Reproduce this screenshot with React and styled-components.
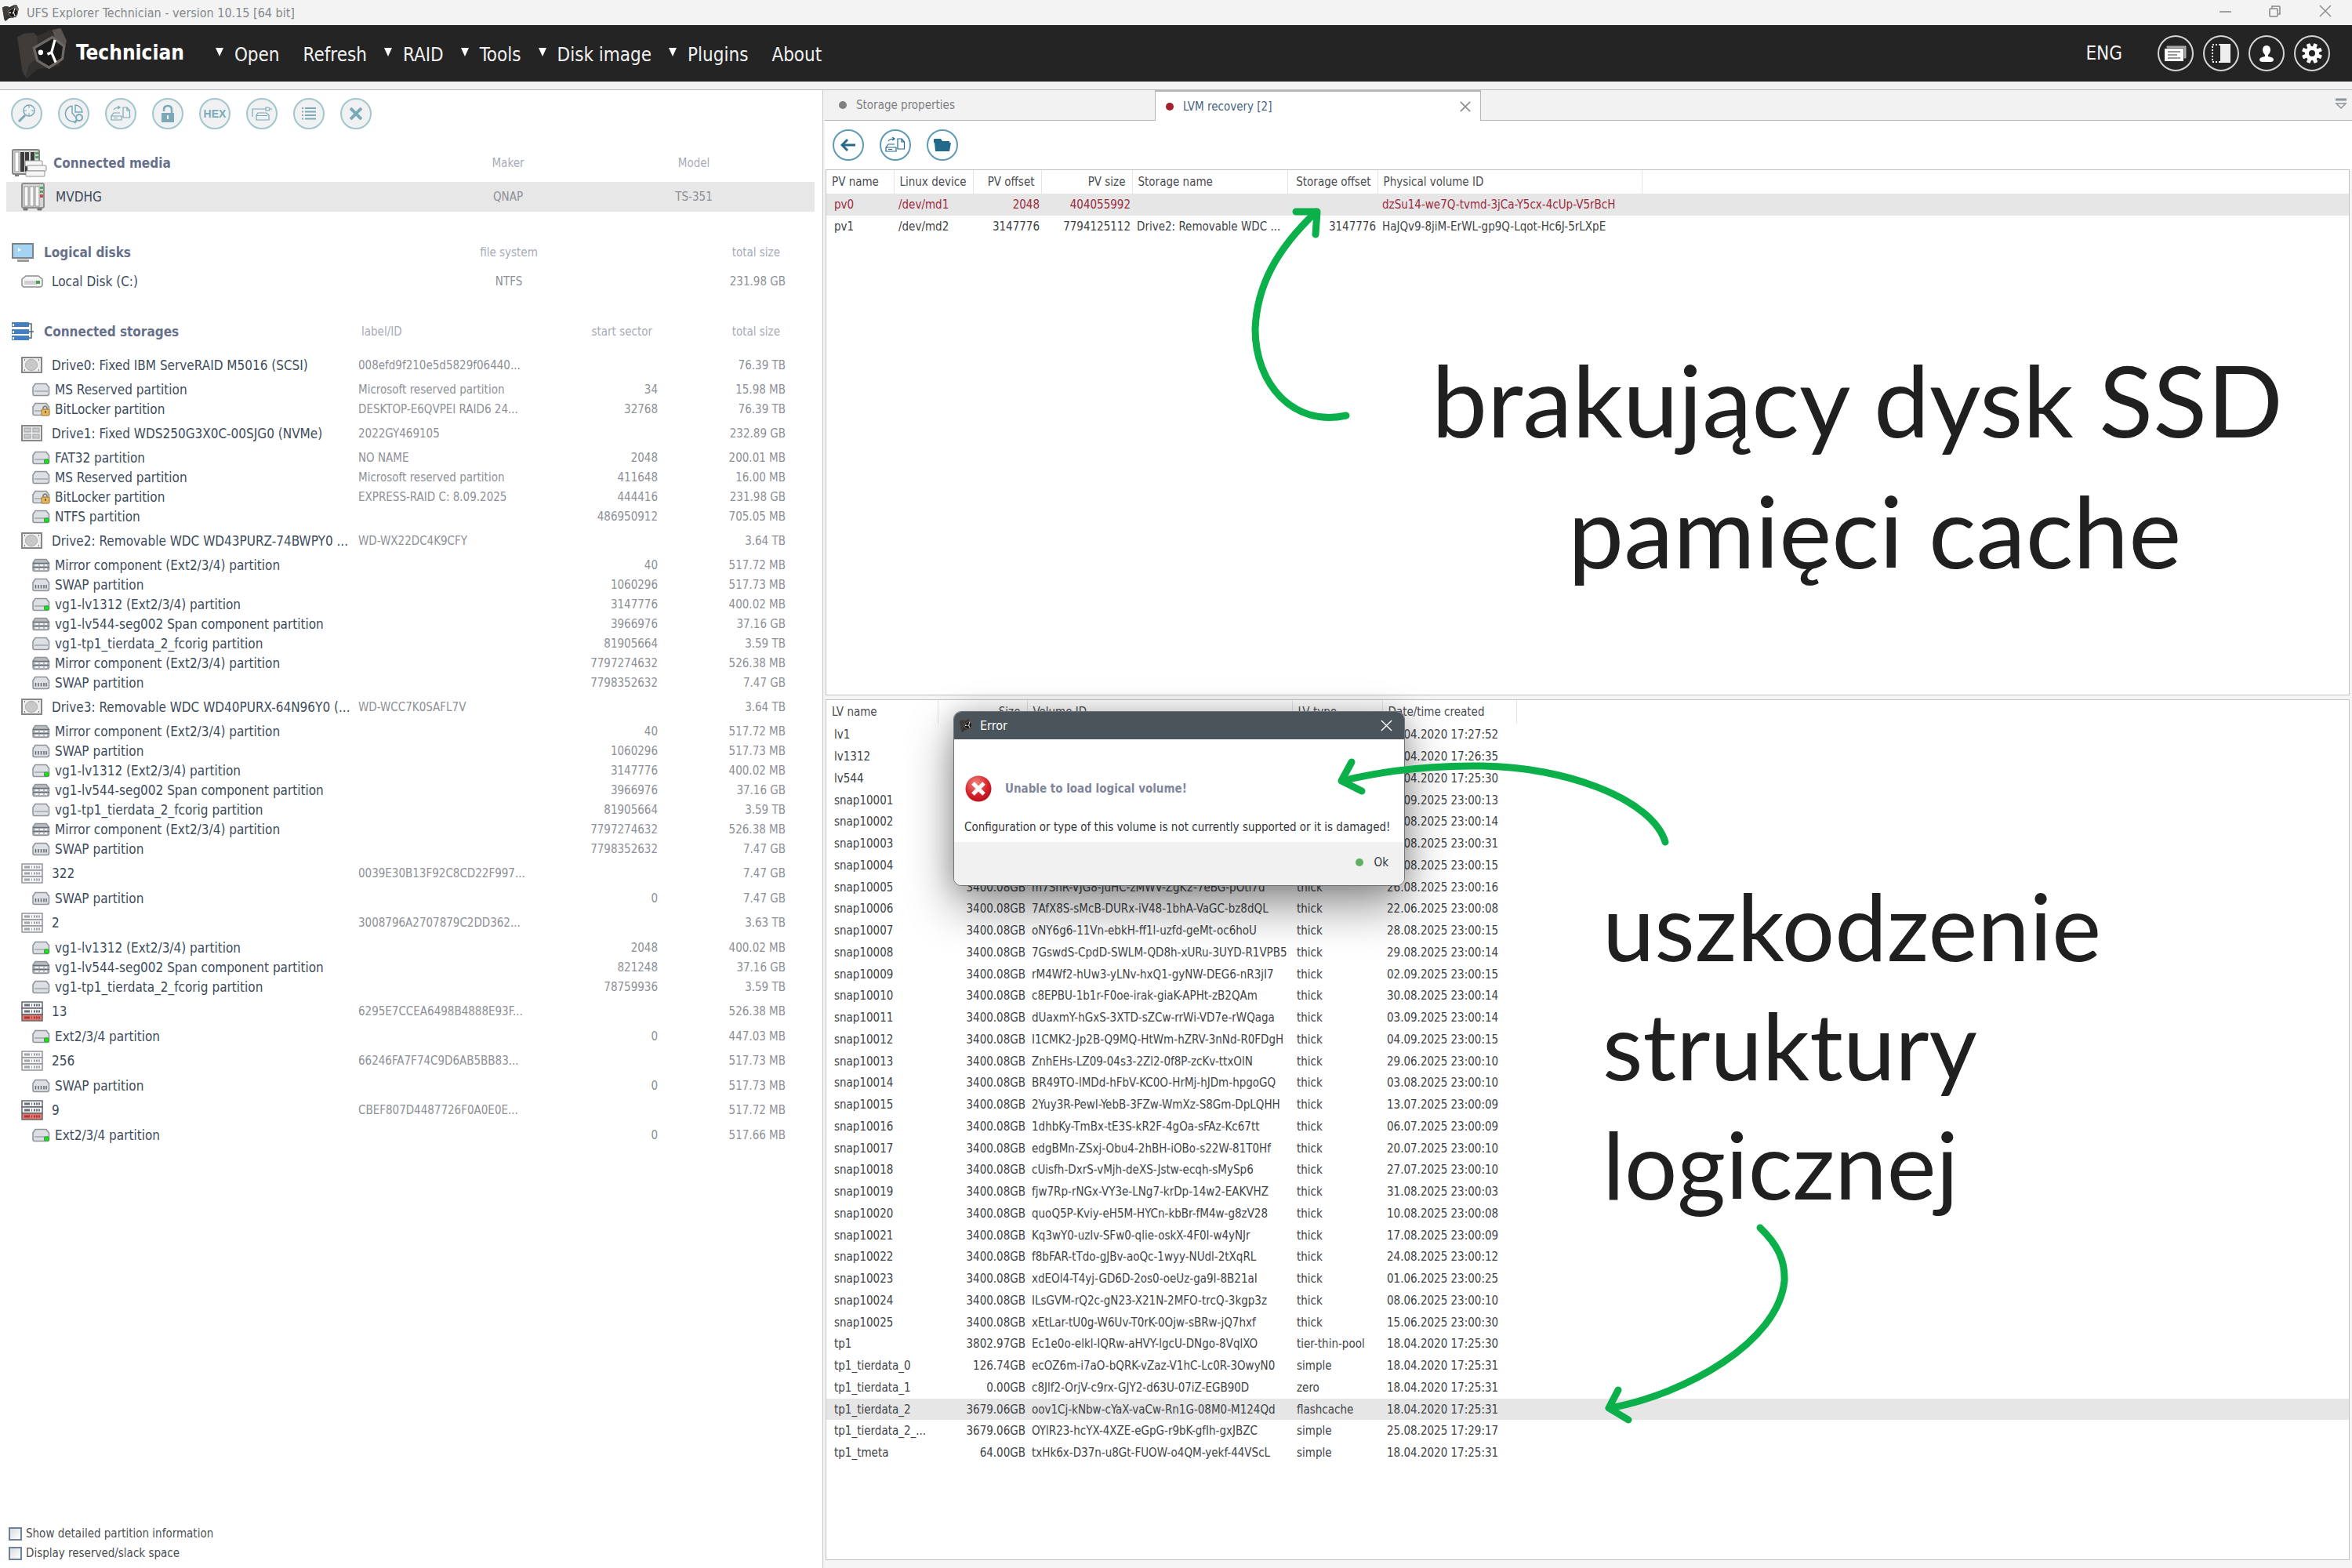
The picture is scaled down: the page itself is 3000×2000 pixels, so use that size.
import React, { useState } from 'react';
import styled, { createGlobalStyle } from 'styled-components';

const GlobalStyle = createGlobalStyle`
  * { box-sizing: border-box; }
  body {
    margin: 0;
    background: #f3f3f3;
    color: #33383d;
    font-family: "DejaVu Sans Condensed", "DejaVu Sans", "Noto Sans", sans-serif;
    font-size: 15px;
  }
  button { font: inherit; color: inherit; background: none; border: 0; padding: 0; cursor: pointer; }
  svg { display: block; }
`;

const Window = styled.div`
  position: relative;
  min-height: 100vh;
  display: flex;
  flex-direction: column;
`;

const TitleBar = styled.header`
  display: flex;
  align-items: center;
  gap: 10px;
  height: 32px;
  padding: 0 26px 0 3px;
  color: #85888b;
  font-size: 16px;
`;

const WindowTitle = styled.span`
  flex: 1;
`;

const WindowButtons = styled.div`
  display: flex;
  gap: 48px;
  margin-bottom: 4px;
`;

const MenuBar = styled.nav`
  display: flex;
  align-items: center;
  height: 72px;
  padding: 0 28px 0 22px;
  background: #242424;
  color: #f1f1f1;
  font-size: 24px;
`;

const Brand = styled.strong`
  margin: 0 40px 2px 11px;
  color: #fff;
  font-size: 26px;
`;

const MenuItems = styled.div`
  display: flex;
  gap: 22px;
  flex: 1;
  padding-top: 3px;
`;

const MenuButton = styled.button`
  display: flex;
  align-items: center;
  gap: 14px;
  margin-left: ${({ $arrow }) => ($arrow ? 0 : 8)}px;

  svg { margin-bottom: 6px; }
`;

const Language = styled.button`
  margin-right: 45px;
`;

const RoundTools = styled.div`
  display: flex;
  gap: 12px;
`;

const RoundTool = styled.button`
  display: grid;
  place-items: center;
  width: 46px;
  height: 46px;
  border: 2px solid #d4d4d4;
  border-radius: 50%;
`;

const Workspace = styled.main`
  flex: 1;
  display: flex;
  margin-top: 10px;
  border-top: 1px solid #b9b9b9;
`;

const Sidebar = styled.section`
  display: flex;
  flex-direction: column;
  width: 35%;
  padding-top: 10px;
  background: #fff;
  border-right: 1px solid #c6c6d2;
`;

const Toolbar = styled.div`
  display: flex;
  gap: 20px;
  padding: ${({ $inset }) => $inset};
`;

const CircleButton = styled.button`
  display: grid;
  place-items: center;
  width: 40px;
  height: 40px;
  border: 2px solid ${({ $strong }) => ($strong ? '#5f9ab8' : '#a3c6cc')};
  border-radius: 50%;
  background: ${({ $strong }) => ($strong ? '#fff' : '#eff1f3')};
  color: ${({ $strong }) => ($strong ? '#22698c' : '#7ba9b8')};
`;

const HexText = styled.span`
  font-family: "Liberation Sans", Arial, sans-serif;
  font-size: 14px;
  font-weight: 700;
`;

const TreeTable = styled.table`
  width: calc(100% - 18px);
  margin: 0 10px 28px 8px;
  border-collapse: collapse;
  table-layout: fixed;
  font-size: 15px;

  th, td { padding: 0; white-space: nowrap; }
`;

const TreeTitle = styled.th`
  height: 48px;
  color: #66708a;
  font-size: 17px;
  text-align: left;
`;

const TreeHead = styled.th`
  color: #a7abb6;
  font-size: 15px;
  font-weight: 400;
  text-align: ${({ $align }) => $align || 'left'};

  && {
    padding-right: ${({ $align }) => ($align === 'right' ? 7 : 0)}px;
    padding-left: ${({ $align }) => ($align ? 0 : 4)}px;
  }
`;

const TreeRow = styled.tr`
  height: ${({ $height }) => $height}px;
  background: ${({ $selected }) => ($selected ? '#e7e7e7' : 'transparent')};
`;

const TreeName = styled.td`
  color: #3d4c5b;
  font-size: 17px;
`;

const TreeCell = styled.td`
  color: #8d9096;
  text-align: ${({ $align }) => $align || 'left'};
`;

const IconLabel = styled.div`
  display: flex;
  align-items: center;
  gap: ${({ $gap }) => $gap}px;
  padding-left: ${({ $indent }) => $indent}px;
`;

const Options = styled.div`
  display: flex;
  flex-direction: column;
  gap: 5px;
  margin-top: auto;
  padding: 0 11px 9px;
`;

const Option = styled.label`
  display: flex;
  align-items: center;
  gap: 5px;
  height: 20px;
  color: #4b4f52;
`;

const Checkbox = styled.input`
  appearance: none;
  width: 17px;
  height: 17px;
  margin: 0;
  border: 2px solid #6d8299;
  background: linear-gradient(135deg, #d9dcdf, #fff);

  &:checked { background: #6d8299; }
`;

const Content = styled.section`
  flex: 1;
  min-width: 0;
  display: flex;
  flex-direction: column;
  margin-left: 2px;
  background: #fff;
`;

const Tabs = styled.div`
  display: flex;
  height: 39px;
  background: #f2f2f2;
`;

const Tab = styled.button`
  display: flex;
  align-items: center;
  gap: 12px;
  width: ${({ $width }) => $width}px;
  padding: ${({ $active }) => ($active ? '0 12px 0 13px' : '0 14px 2px 18px')};
  border: solid #b5b5b5;
  border-width: ${({ $active }) => ($active ? '2px 1px 0 1px' : '2px 0 1px 0')};
  border-top-color: ${({ $active }) => ($active ? '#b5b5b5' : 'transparent')};
  background: ${({ $active }) => ($active ? '#fff' : 'transparent')};
  color: ${({ $active }) => ($active ? '#47657f' : '#7d8083')};
  text-align: left;
`;

const TabLabel = styled.span`
  flex: 1;
`;

const TabFill = styled.div`
  flex: 1;
  display: flex;
  justify-content: flex-end;
  align-items: flex-start;
  padding: 10px 6px 0 0;
  border-bottom: 1px solid #b5b5b5;
`;

const Dot = styled.span`
  width: 10px;
  height: 10px;
  border-radius: 50%;
  background: ${({ $color }) => $color};
`;

const Panes = styled.div`
  flex: 1;
  display: grid;
  grid-template-rows: minmax(0, 671fr) minmax(0, 1097fr);
  gap: 5px;
  padding: 0 3px 10px 1px;
  background: #f5f5f5;
`;

const Pane = styled.div`
  overflow: hidden;
  border: 1px solid #c2c2c4;
  background: #fff;
`;

const Grid = styled.table`
  width: 100%;
  border-collapse: collapse;
  table-layout: fixed;
  white-space: nowrap;
`;

const GridHead = styled.th`
  height: 30px;
  padding: 0 8px 0 7px;
  border-right: 1px solid ${({ $last }) => ($last ? 'transparent' : '#e4e4e4')};
  color: #4a4d50;
  font-weight: 400;
  text-align: ${({ $align }) => $align || 'left'};
`;

const GridRow = styled.tr`
  height: 28px;
  background: ${({ $selected }) => ($selected ? '#e6e6e6' : 'transparent')};
  color: ${({ $missing }) => ($missing ? '#9c2b3f' : '#404346')};

  &:nth-child(4n) { height: 27px; }
`;

const GridCell = styled.td`
  padding: 0 2px 0 6px;
  text-align: ${({ $align }) => $align || 'left'};

  &:first-child { padding-left: 10px; }
`;

const Dialog = styled.div`
  position: absolute;
  left: 1216px;
  top: 907px;
  width: 576px;
  overflow: hidden;
  border: 1px solid #6f7478;
  border-radius: 10px;
  background: #fff;
  box-shadow: 0 26px 60px rgba(0, 0, 0, 0.42), 0 0 30px rgba(0, 0, 0, 0.18);
`;

const DialogTitle = styled.div`
  display: flex;
  align-items: center;
  gap: 9px;
  height: 35px;
  padding: 0 15px 0 7px;
  background: #4b545a;
  color: #fff;
  font-size: 16px;
`;

const DialogBody = styled.div`
  height: 131px;
  padding: 45px 13px 0;
`;

const DialogHeading = styled.div`
  display: flex;
  align-items: center;
  gap: 16px;
  color: #80869a;
  font-size: 15px;
  font-weight: 700;
`;

const DialogText = styled.p`
  margin: 22px 0 0;
  color: #33363a;
`;

const DialogFooter = styled.div`
  display: flex;
  justify-content: flex-end;
  height: 55px;
  padding: 0 20px 4px;
  background: #f1f1f1;
`;

const OkButton = styled.button`
  display: flex;
  align-items: center;
  gap: 14px;
`;

const Notes = styled.div`
  position: absolute;
  inset: 0;
  pointer-events: none;
  overflow: hidden;
`;

const Note = styled.p`
  position: absolute;
  left: ${({ $left }) => $left}px;
  top: ${({ $top }) => $top}px;
  margin: 0;
  color: #202020;
  font-family: Lato, "Open Sans", sans-serif;
  font-size: ${({ $size }) => $size}px;
  line-height: 152px;
  white-space: nowrap;
`;

const Arrows = styled.svg`
  position: absolute;
  left: 1580px;
  top: 240px;
`;

const Logo = ({ size = 18 }) => (
  <svg width={size} height={size} viewBox="0 0 60 56" preserveAspectRatio="none">
    <path d="M0 10 L8 6 20 5 24 9 40 2 50 0 54 4 59 14 57 24 50 42 24 46 12 56 8 52Z" fill="#33312f" />
    <path d="M0 10 L8 6 20 5 24 9 24 34 14 40 10 55 6 48Z" fill="#3f3c3a" />
    <path d="M42 2 L52 0 59 14 56 26 46 14Z" fill="#5a5552" />
    <path d="M20 22 L42 10 56 20 54 34 38 44 24 36Z" fill="#1a1a1a" stroke="#6d6863" strokeWidth="3" />
    <path d="M45 13 L41 27 46 38 M41 27 L36 29" fill="none" stroke="#fff" strokeWidth="3" />
    <circle cx="28" cy="27" r="3" fill="#fff" />
  </svg>
);

const Cross = ({ size = 16, color = '#8c8f92', weight = 2 }) => (
  <svg width={size} height={size} viewBox="0 0 16 16" stroke={color} strokeWidth={weight}>
    <path d="M1 1 L15 15 M15 1 L1 15" />
  </svg>
);

const NasIcon = () => (
  <svg width="32" height="36" viewBox="0 0 32 36">
    <rect x="2" y="1" width="28" height="31" rx="2" fill="#d6d6d6" stroke="#8f8f8f" strokeWidth="2" />
    {[5, 12, 19].map(x => <rect key={x} x={x} y="5" width="5" height="25" fill="#f8f8f8" stroke="#929292" />)}
    <path d="M4 33 h5 v2 h-5z M22 33 h5 v2 h-5z" fill="#777" stroke="#777" />
    <path d="M27 5 v8" stroke="#47a75a" strokeWidth="4" strokeDasharray="3 2" />
    <rect x="25" y="15" width="4" height="4" fill="#c54a50" />
  </svg>
);

const MediaIcon = () => (
  <svg width="46" height="36" viewBox="0 0 46 36">
    <rect x="1" y="1" width="34" height="31" rx="2" fill="#d8d8d8" stroke="#858585" strokeWidth="2" />
    <rect x="4" y="4" width="5" height="25" fill="#fff" stroke="#999" />
    {[11, 17, 24].map(x => <rect key={x} x={x} y="4" width="5" height="25" fill="#3d3d3d" />)}
    <path d="M32 4 v9" stroke="#47a75a" strokeWidth="4" strokeDasharray="3 2" />
    <path d="M4 33 h5 v2 h-5z" fill="#777" />
    <rect x="17" y="15" width="22" height="7" rx="1" fill="#f6f6f6" stroke="#929292" />
    <rect x="20" y="21" width="24" height="7" rx="1" fill="#f6f6f6" stroke="#929292" />
    <rect x="18" y="28" width="24" height="7" rx="1" fill="#f6f6f6" stroke="#929292" />
  </svg>
);

const MonitorIcon = () => (
  <svg width="28" height="24" viewBox="0 0 28 24">
    <rect x="1" y="1" width="26" height="18" fill="#a5d3f2" stroke="#7d838a" strokeWidth="2" />
    <path d="M8 6 l4 3 -4 2z" fill="#fff" />
    <path d="M7 22.5 h15" stroke="#999" strokeWidth="3" />
  </svg>
);

const LocalDiskIcon = () => (
  <svg width="28" height="16" viewBox="0 0 28 16">
    <path d="M1 5 L6 1 H22 L27 5 V13 L25 15 H3 L1 13Z" fill="#f5f5f5" stroke="#8a8d91" strokeWidth="1.5" />
    <rect x="4" y="7" width="16" height="5" fill="#cfcfd2" />
    <rect x="19" y="7" width="5" height="4" fill="#45a450" />
  </svg>
);

const StoragesIcon = () => (
  <svg width="28" height="24" viewBox="0 0 28 24">
    {[0, 9, 17].map(y => (
      <g key={y}>
        <rect x="0" y={y} width="22" height="6" fill="#447fc0" />
        <rect x="1" y={y + 2} width="2" height="3" fill="#fff" />
      </g>
    ))}
    <path d="M22 2 h3 v18 h-3 M22 12 h6" fill="none" stroke="#5c6269" strokeWidth="1.5" />
  </svg>
);

const DriveIcon = ({ kind }) => {
  if (kind === 'hdd' || kind === 'nvme') {
    return (
      <svg width="28" height="21" viewBox="0 0 28 21">
        <rect x="1" y="1" width="25" height="19" fill="#ededed" stroke="#85878a" strokeWidth="2" />
        {kind === 'hdd' ? (
          <>
            <ellipse cx="13" cy="10.5" rx="7.5" ry="7" fill="#c8c8c8" stroke="#aaa" />
            <path d="M4 4h1M22 4h1M4 17h1M22 17h1" stroke="#777" strokeWidth="2" />
          </>
        ) : (
          <g fill="#c9cbcd" stroke="#9d9fa1">
            <rect x="4" y="4" width="8" height="5" /><rect x="15" y="4" width="8" height="5" />
            <rect x="4" y="12" width="8" height="5" /><rect x="15" y="12" width="8" height="5" />
          </g>
        )}
      </svg>
    );
  }
  const bad = kind === 'raidBad';
  return (
    <svg width="28" height="27" viewBox="0 0 28 27">
      {[1, 9, 17].map((y, i) => {
        const broken = bad && i === 2;
        return (
          <g key={y}>
            <rect x="1" y={y} width="26" height="8" fill={broken ? '#e8756c' : '#f4f5f6'} stroke={bad ? '#63676c' : '#94979b'} strokeWidth="1.5" />
            <path d={`M4 ${y + 4} h7 M13 ${y + 4} h1 M16 ${y + 4} h2 M19 ${y + 4} h2 M22 ${y + 4} h2`} stroke={broken ? '#a63a34' : bad ? '#6b6f75' : '#a2a5a9'} strokeWidth="3" />
          </g>
        );
      })}
    </svg>
  );
};

const PartitionIcon = ({ kind }) => (
  <svg width="24" height="18" viewBox="0 0 24 18">
    <path d="M1 6 L4 1.500 H18 L21.500 6 V14 Q21.500 16.500 19 16.500 H3 Q1 16.500 1 14Z" fill={kind === 'mirror' ? '#b9bdc2' : '#dcdfe3'} stroke="#8f9398" strokeWidth="1.5" />
    {kind === 'swap' && <path d="M4.500 13.500V9M8 13.500V9M11.500 13.500V9M15 13.500V9M18 13.500V9" stroke="#63686e" strokeWidth="1.5" />}
    {kind === 'mirror' && (
      <>
        <path d="M1 6.500H22M1 11.500H22" stroke="#6a6f76" strokeWidth="1.5" />
        <path d="M4 9H19M4 14H19" stroke="#f3f4f5" strokeWidth="2" strokeDasharray="4 2" />
      </>
    )}
    {(!kind || kind === 'ok' || kind === 'lock') && <path d="M3 11H20" stroke="#a3a7ac" strokeWidth="1.5" />}
    {kind === 'ok' && <rect x="15.500" y="11" width="6" height="5" rx="1" fill="#1fe01f" stroke="#3aa03d" />}
    {kind === 'lock' && (
      <>
        <path d="M14 9V7q2.500-4 5 0v2" fill="none" stroke="#777" strokeWidth="1.5" />
        <rect x="12" y="9" width="10" height="8" rx="1" fill="#eab65a" stroke="#9b7638" />
        <path d="M17 11v3" stroke="#6d4d16" strokeWidth="1.5" />
      </>
    )}
  </svg>
);

const toolIcons = {
  find: (
    <svg width="24" height="24" viewBox="0 0 24 24" fill="none" stroke="currentColor" strokeWidth="1.500">
      <circle cx="15" cy="8" r="7" /><path d="M10 14 L2 22" strokeWidth="3" /><path d="M15 1v4M15 11v4M8 8h4M18 8h4" strokeWidth="1" />
    </svg>
  ),
  scan: (
    <svg width="26" height="26" viewBox="0 0 26 26" fill="none" stroke="currentColor" strokeWidth="1.5">
      <path d="M11 3 A10 10 0 1 0 14 23 M11 3 V12 L15 17" /><path d="M15 2 V11 H24 Q23 3 15 2Z" /><circle cx="20" cy="18" r="4" strokeWidth="2" /><path d="M17 21l-3 4" strokeWidth="2.500" />
    </svg>
  ),
  copy: (
    <svg width="26" height="20" viewBox="0 0 26 20" fill="none" stroke="currentColor" strokeWidth="1.200">
      <path d="M1 13 L4 9 H12 M1 13 H14 V18 H1Z M4 15.500 H9" /><path d="M16 2 H21 L24.500 6 V15 H16Z M21 2V6H24.500" /><path d="M4 5 Q6 2 11 2 M9 0l3 2-3 2" />
    </svg>
  ),
  lock: (
    <svg width="18" height="24" viewBox="0 0 18 24">
      <path d="M4 9 V7 Q4 2 9 2 Q14 2 14 7 V12" fill="none" stroke="currentColor" strokeWidth="2.500" />
      <rect x="1" y="11" width="16" height="12" fill="currentColor" /><path d="M9 14v5" stroke="#fff" strokeWidth="2" />
    </svg>
  ),
  link: (
    <svg width="26" height="20" viewBox="0 0 26 20" fill="none" stroke="currentColor" strokeWidth="1.200">
      <path d="M1 14V4H18M18 2h3q2 0 2 2t-2 2h-3zM23 4h3" /><path d="M6 18V12L8 9H19L22 12V18Z M6 12.500h14" />
    </svg>
  ),
  list: (
    <svg width="18" height="18" viewBox="0 0 18 18" stroke="currentColor" strokeWidth="2">
      <path d="M0 2h2M4 2h14M0 6.500h2M4 6.500h14M0 11h2M4 11h14M0 15.500h2M4 15.500h14" />
    </svg>
  ),
  close: <Cross size={16} color="currentColor" weight={4} />,
  back: (
    <svg width="20" height="18" viewBox="0 0 20 18" fill="none" stroke="currentColor" strokeWidth="3">
      <path d="M19 9H2M9 2L2 9l7 7" />
    </svg>
  ),
  folder: (
    <svg width="22" height="18" viewBox="0 0 22 18" fill="currentColor">
      <path d="M0 2 Q0 1 1 1H9L11 4H20V6H0Z" /><path d="M1 6H22L20 17H2Z" />
    </svg>
  ),
};

const leftTools = [
  ['find', 'Find'], ['scan', 'Scan'], ['copy', 'Save image'], ['lock', 'Decrypt'],
  ['hex', 'Hex viewer'], ['link', 'Attach'], ['list', 'Properties'], ['close', 'Close storage'],
];

const menu = [
  ['Open', true], ['Refresh', false], ['RAID', true], ['Tools', true],
  ['Disk image', true], ['Plugins', true], ['About', false],
];

const wdParts = [
  ['mirror', 'Mirror component (Ext2/3/4) partition', '', '40', '517.72 MB'],
  ['swap', 'SWAP partition', '', '1060296', '517.73 MB'],
  ['ok', 'vg1-lv1312 (Ext2/3/4) partition', '', '3147776', '400.02 MB'],
  ['mirror', 'vg1-lv544-seg002 Span component partition', '', '3966976', '37.16 GB'],
  ['', 'vg1-tp1_tierdata_2_fcorig partition', '', '81905664', '3.59 TB'],
  ['mirror', 'Mirror component (Ext2/3/4) partition', '', '7797274632', '526.38 MB'],
  ['swap', 'SWAP partition', '', '7798352632', '7.47 GB'],
];

const storages = [
  {
    kind: 'hdd', name: 'Drive0: Fixed IBM ServeRAID M5016 (SCSI)', label: '008efd9f210e5d5829f06440...', size: '76.39 TB',
    parts: [
      ['', 'MS Reserved partition', 'Microsoft reserved partition', '34', '15.98 MB'],
      ['lock', 'BitLocker partition', 'DESKTOP-E6QVPEI RAID6 24...', '32768', '76.39 TB'],
    ],
  },
  {
    kind: 'nvme', name: 'Drive1: Fixed WDS250G3X0C-00SJG0 (NVMe)', label: '2022GY469105', size: '232.89 GB',
    parts: [
      ['ok', 'FAT32 partition', 'NO NAME', '2048', '200.01 MB'],
      ['', 'MS Reserved partition', 'Microsoft reserved partition', '411648', '16.00 MB'],
      ['lock', 'BitLocker partition', 'EXPRESS-RAID C: 8.09.2025', '444416', '231.98 GB'],
      ['ok', 'NTFS partition', '', '486950912', '705.05 MB'],
    ],
  },
  { kind: 'hdd', name: 'Drive2: Removable WDC WD43PURZ-74BWPY0 ...', label: 'WD-WX22DC4K9CFY', size: '3.64 TB', parts: wdParts },
  { kind: 'hdd', name: 'Drive3: Removable WDC WD40PURX-64N96Y0 (...', label: 'WD-WCC7K0SAFL7V', size: '3.64 TB', parts: wdParts },
  { kind: 'raid', name: '322', label: '0039E30B13F92C8CD22F997...', size: '7.47 GB', parts: [['swap', 'SWAP partition', '', '0', '7.47 GB']] },
  {
    kind: 'raid', name: '2', label: '3008796A2707879C2DD362...', size: '3.63 TB',
    parts: [
      ['ok', 'vg1-lv1312 (Ext2/3/4) partition', '', '2048', '400.02 MB'],
      ['mirror', 'vg1-lv544-seg002 Span component partition', '', '821248', '37.16 GB'],
      ['', 'vg1-tp1_tierdata_2_fcorig partition', '', '78759936', '3.59 TB'],
    ],
  },
  { kind: 'raidBad', name: '13', label: '6295E7CCEA6498B4888E93F...', size: '526.38 MB', parts: [['ok', 'Ext2/3/4 partition', '', '0', '447.03 MB']] },
  { kind: 'raid', name: '256', label: '66246FA7F74C9D6AB5BB83...', size: '517.73 MB', parts: [['swap', 'SWAP partition', '', '0', '517.73 MB']] },
  { kind: 'raidBad', name: '9', label: 'CBEF807D4487726F0A0E0E...', size: '517.72 MB', parts: [['ok', 'Ext2/3/4 partition', '', '0', '517.66 MB']] },
];

const pvColumns = [
  ['PV name', 86], ['Linux device', 101], ['PV offset', 87, 'right'], ['PV size', 116, 'right'],
  ['Storage name', 198], ['Storage offset', 115, 'right'], ['Physical volume ID', 337],
];

const pvRows = [
  ['pv0', '/dev/md1', '2048', '404055992', '', '', 'dzSu14-we7Q-tvmd-3jCa-Y5cx-4cUp-V5rBcH'],
  ['pv1', '/dev/md2', '3147776', '7794125112', 'Drive2: Removable WDC ...', '3147776', 'HaJQv9-8jiM-ErWL-gp9Q-Lqot-Hc6J-5rLXpE'],
];

const lvColumns = [
  ['LV name', 142], ['Size', 114, 'right'], ['Volume ID', 338], ['LV type', 115], ['Date/time created', 171],
];

// snap10005 and up
const snaps = [
  ['m7ShR-VJG8-juHC-zMWV-ZgK2-7eBG-pOti7d', '26.08.2025 23:00:16'],
  ['7AfX8S-sMcB-DURx-iV48-1bhA-VaGC-bz8dQL', '22.06.2025 23:00:08'],
  ['oNY6g6-11Vn-ebkH-ff1l-uzfd-geMt-oc6hoU', '28.08.2025 23:00:15'],
  ['7GswdS-CpdD-SWLM-QD8h-xURu-3UYD-R1VPB5', '29.08.2025 23:00:14'],
  ['rM4Wf2-hUw3-yLNv-hxQ1-gyNW-DEG6-nR3jI7', '02.09.2025 23:00:15'],
  ['c8EPBU-1b1r-F0oe-irak-giaK-APHt-zB2QAm', '30.08.2025 23:00:14'],
  ['dUaxmY-hGxS-3XTD-sZCw-rrWi-VD7e-rWQaga', '03.09.2025 23:00:14'],
  ['I1CMK2-Jp2B-Q9MQ-HtWm-hZRV-3nNd-R0FDgH', '04.09.2025 23:00:15'],
  ['ZnhEHs-LZ09-04s3-2Zl2-0f8P-zcKv-ttxOlN', '29.06.2025 23:00:10'],
  ['BR49TO-lMDd-hFbV-KC0O-HrMj-hJDm-hpgoGQ', '03.08.2025 23:00:10'],
  ['2Yuy3R-PewI-YebB-3FZw-WmXz-S8Gm-DpLQHH', '13.07.2025 23:00:09'],
  ['1dhbKy-TmBx-tE3S-kR2F-4gOa-sFAz-Kc67tt', '06.07.2025 23:00:09'],
  ['edgBMn-ZSxj-Obu4-2hBH-iOBo-s22W-81T0Hf', '20.07.2025 23:00:10'],
  ['cUisfh-DxrS-vMjh-deXS-Jstw-ecqh-sMySp6', '27.07.2025 23:00:10'],
  ['fjw7Rp-rNGx-VY3e-LNg7-krDp-14w2-EAKVHZ', '31.08.2025 23:00:03'],
  ['quoQ5P-Kviy-eH5M-HYCn-kbBr-fM4w-g8zV28', '10.08.2025 23:00:08'],
  ['Kq3wY0-uzIv-SFw0-qlie-oskX-4F0I-w4yNJr', '17.08.2025 23:00:09'],
  ['f8bFAR-tTdo-gJBv-aoQc-1wyy-NUdl-2tXqRL', '24.08.2025 23:00:12'],
  ['xdEOl4-T4yj-GD6D-2os0-oeUz-ga9I-8B21aI', '01.06.2025 23:00:25'],
  ['ILsGVM-rQ2c-gN23-X21N-2MFO-trcQ-3kgp3z', '08.06.2025 23:00:10'],
  ['xEtLar-tU0g-W6Uv-T0rK-0Ojw-sBRw-jQ7hxf', '15.06.2025 23:00:30'],
];

const lvRows = [
  ['lv1', '', '', '', '18.04.2020 17:27:52'],
  ['lv1312', '', '', '', '18.04.2020 17:26:35'],
  ['lv544', '', '', '', '18.04.2020 17:25:30'],
  ['snap10001', '', '', '', '01.09.2025 23:00:13'],
  ['snap10002', '', '', '', '24.08.2025 23:00:14'],
  ['snap10003', '', '', '', '31.08.2025 23:00:31'],
  ['snap10004', '', '', '', '27.08.2025 23:00:15'],
  ...snaps.map(([id, date], i) => [`snap${10005 + i}`, '3400.08GB', id, 'thick', date]),
  ['tp1', '3802.97GB', 'Ec1e0o-elkl-IQRw-aHVY-lgcU-DNgo-8VqlXO', 'tier-thin-pool', '18.04.2020 17:25:30'],
  ['tp1_tierdata_0', '126.74GB', 'ecOZ6m-i7aO-bQRK-vZaz-V1hC-Lc0R-3OwyN0', 'simple', '18.04.2020 17:25:31'],
  ['tp1_tierdata_1', '0.00GB', 'c8Jlf2-OrjV-c9rx-GJY2-d63U-07iZ-EGB90D', 'zero', '18.04.2020 17:25:31'],
  ['tp1_tierdata_2', '3679.06GB', 'oov1Cj-kNbw-cYaX-vaCw-Rn1G-08M0-M124Qd', 'flashcache', '18.04.2020 17:25:31'],
  ['tp1_tierdata_2_...', '3679.06GB', 'OYlR23-hcYX-4XZE-eGpG-r9bK-gfIh-gxJBZC', 'simple', '25.08.2025 17:29:17'],
  ['tp1_tmeta', '64.00GB', 'txHk6x-D37n-u8Gt-FUOW-o4QM-yekf-44VScL', 'simple', '18.04.2020 17:25:31'],
];

function DataGrid({ columns, rows, selected, missing }) {
  return (
    <Grid>
      <colgroup>
        {columns.map(([title, width]) => <col key={title} width={width} />)}
        <col />
      </colgroup>
      <thead>
        <tr>
          {columns.map(([title, , align]) => <GridHead key={title} $align={align}>{title}</GridHead>)}
          <GridHead $last />
        </tr>
      </thead>
      <tbody>
        {rows.map(row => (
          <GridRow key={row[0]} $selected={row[0] === selected} $missing={row[0] === missing}>
            {row.map((cell, i) => <GridCell key={i} $align={columns[i][2]}>{cell}</GridCell>)}
            <GridCell />
          </GridRow>
        ))}
      </tbody>
    </Grid>
  );
}

function StorageTree() {
  return (
    <>
      <TreeTable>
        <colgroup><col /><col width="238" /><col width="236" /><col width="36" /></colgroup>
        <thead>
          <tr>
            <TreeTitle><IconLabel $indent={7} $gap={7}><MediaIcon />Connected media</IconLabel></TreeTitle>
            <TreeHead $align="center">Maker</TreeHead>
            <TreeHead $align="center">Model</TreeHead>
            <th />
          </tr>
        </thead>
        <tbody>
          <TreeRow $height={38} $selected>
            <TreeName><IconLabel $indent={18} $gap={13}><NasIcon />MVDHG</IconLabel></TreeName>
            <TreeCell $align="center">QNAP</TreeCell>
            <TreeCell $align="center">TS-351</TreeCell>
            <td />
          </TreeRow>
        </tbody>
      </TreeTable>

      <TreeTable>
        <colgroup><col /><col width="238" /><col width="234" /><col width="37" /></colgroup>
        <thead>
          <tr>
            <TreeTitle><IconLabel $indent={7} $gap={13}><MonitorIcon />Logical disks</IconLabel></TreeTitle>
            <TreeHead $align="center">file system</TreeHead>
            <TreeHead $align="right">total size</TreeHead>
            <th />
          </tr>
        </thead>
        <tbody>
          <TreeRow $height={25}>
            <TreeName><IconLabel $indent={19} $gap={11}><LocalDiskIcon />Local Disk (C:)</IconLabel></TreeName>
            <TreeCell $align="center">NTFS</TreeCell>
            <TreeCell $align="right">231.98 GB</TreeCell>
            <td />
          </TreeRow>
        </tbody>
      </TreeTable>

      <TreeTable>
        <colgroup><col /><col width="234" /><col width="148" /><col width="163" /><col width="37" /></colgroup>
        <thead>
          <tr>
            <TreeTitle><IconLabel $indent={7} $gap={13}><StoragesIcon />Connected storages</IconLabel></TreeTitle>
            <TreeHead>label/ID</TreeHead>
            <TreeHead $align="right">start sector</TreeHead>
            <TreeHead $align="right">total size</TreeHead>
            <th />
          </tr>
        </thead>
        <tbody>
          {storages.map(drive => (
            <React.Fragment key={drive.name}>
              <TreeRow $height={drive.kind.startsWith('raid') ? 38 : 37}>
                <TreeName><IconLabel $indent={19} $gap={11}><DriveIcon kind={drive.kind} />{drive.name}</IconLabel></TreeName>
                <TreeCell>{drive.label}</TreeCell>
                <TreeCell />
                <TreeCell $align="right">{drive.size}</TreeCell>
                <td />
              </TreeRow>
              {drive.parts.map(([kind, name, label, start, size]) => (
                <TreeRow key={start} $height={25}>
                  <TreeName><IconLabel $indent={33} $gap={5}><PartitionIcon kind={kind} />{name}</IconLabel></TreeName>
                  <TreeCell>{label}</TreeCell>
                  <TreeCell $align="right">{start}</TreeCell>
                  <TreeCell $align="right">{size}</TreeCell>
                  <td />
                </TreeRow>
              ))}
            </React.Fragment>
          ))}
        </tbody>
      </TreeTable>
    </>
  );
}

function TopBar() {
  return (
    <>
      <TitleBar>
        <Logo size={21} />
        <WindowTitle>UFS Explorer Technician - version 10.15 [64 bit]</WindowTitle>
        <WindowButtons>
          <button aria-label="Minimize">
            <svg width="15" height="15" stroke="#85888b" strokeWidth="1.500"><path d="M0 8h15" /></svg>
          </button>
          <button aria-label="Restore">
            <svg width="16" height="15" fill="none" stroke="#85888b" strokeWidth="1.500"><rect x="1" y="4" width="10" height="10" rx="1" /><path d="M4 3V1h9q1 0 1 1v9h-2" /></svg>
          </button>
          <button aria-label="Close"><Cross weight={1.5} /></button>
        </WindowButtons>
      </TitleBar>
      <MenuBar>
        <Logo size={64} />
        <Brand>Technician</Brand>
        <MenuItems>
          {menu.map(([label, arrow]) => (
            <MenuButton key={label} $arrow={arrow}>
              {arrow && <svg width="10" height="11" viewBox="0 0 10 11" fill="#fff"><path d="M0 0H10L5 11Z" /></svg>}
              {label}
            </MenuButton>
          ))}
        </MenuItems>
        <Language>ENG</Language>
        <RoundTools>
          <RoundTool aria-label="Messages">
            <svg width="28" height="20" viewBox="0 0 28 20">
              <path d="M3 1H27V16H25V3H3Z" fill="#aaa" stroke="#aaa" />
              <rect x="0" y="4" width="24" height="16" fill="#fff" />
              <path d="M4 8h16M4 12h12M4 16h16" stroke="#777" strokeWidth="1.500" />
            </svg>
          </RoundTool>
          <RoundTool aria-label="Layout">
            <svg width="24" height="24" viewBox="0 0 24 24">
              <rect x="11" y="0" width="13" height="24" fill="#eee" />
              <path d="M11 1H1V23H11" fill="none" stroke="#fff" strokeWidth="2" strokeDasharray="2 2" />
            </svg>
          </RoundTool>
          <RoundTool aria-label="User">
            <svg width="18" height="21" viewBox="0 0 18 21" fill="#fff">
              <path d="M9 0Q14 0 14 6Q14 9 11 12V14Q18 15 18 18Q18 21 14 21H4Q0 21 0 18Q0 15 7 14V12Q4 9 4 6Q4 0 9 0Z" />
            </svg>
          </RoundTool>
          <RoundTool aria-label="Settings">
            <svg width="26" height="26" viewBox="-13 -13 26 26">
              {[22, 67, 112, 157].map(a => <rect key={a} x="-2.500" y="-13" width="5" height="26" rx="1" fill="#fff" transform={`rotate(${a})`} />)}
              <circle r="9" fill="#fff" /><circle r="4" fill="#242424" />
            </svg>
          </RoundTool>
        </RoundTools>
      </MenuBar>
    </>
  );
}

function ErrorDialog({ onClose }) {
  return (
    <Dialog role="dialog" aria-label="Error">
      <DialogTitle>
        <Logo size={17} />
        <TabLabel>Error</TabLabel>
        <button aria-label="Close dialog" onClick={onClose}><Cross size={15} color="#fff" weight={1.5} /></button>
      </DialogTitle>
      <DialogBody>
        <DialogHeading>
          <svg width="36" height="36" viewBox="0 0 36 36">
            <defs>
              <radialGradient id="error" cx="0.400" cy="0.300" r="0.800"><stop stopColor="#f08a80" /><stop offset="0.600" stopColor="#d5202a" /><stop offset="1" stopColor="#a80f1a" /></radialGradient>
            </defs>
            <circle cx="18" cy="18" r="16.500" fill="url(#error)" />
            <path d="M11 11L25 25M25 11L11 25" stroke="#fff" strokeWidth="5" />
          </svg>
          Unable to load logical volume!
        </DialogHeading>
        <DialogText>Configuration or type of this volume is not currently supported or it is damaged!</DialogText>
      </DialogBody>
      <DialogFooter>
        <OkButton onClick={onClose}><Dot $color="#5fb063" />Ok</OkButton>
      </DialogFooter>
    </Dialog>
  );
}

export default function App() {
  const [errorOpen, setErrorOpen] = useState(true);

  return (
    <Window>
      <GlobalStyle />
      <TopBar />
      <Workspace>
        <Sidebar>
          <Toolbar $inset="0 14px 19px">
            {leftTools.map(([icon, label]) => (
              <CircleButton key={icon} aria-label={label}>
                {icon === 'hex' ? <HexText>HEX</HexText> : toolIcons[icon]}
              </CircleButton>
            ))}
          </Toolbar>
          <StorageTree />
          <Options>
            <Option><Checkbox type="checkbox" />Show detailed partition information</Option>
            <Option><Checkbox type="checkbox" />Display reserved/slack space</Option>
          </Options>
        </Sidebar>

        <Content>
          <Tabs>
            <Tab $width={421}><Dot $color="#808080" /><TabLabel>Storage properties</TabLabel></Tab>
            <Tab $width={416} $active>
              <Dot $color="#a3202d" /><TabLabel>LVM recovery [2]</TabLabel><Cross size={14} />
            </Tab>
            <TabFill>
              <button aria-label="Tab list">
                <svg width="16" height="16" viewBox="0 0 16 16" fill="none" stroke="#8d949c"><path d="M1 2H15" strokeWidth="3" /><path d="M2 7H14L8 13Z" strokeWidth="1.500" /></svg>
              </button>
            </TabFill>
          </Tabs>
          <Toolbar $inset="11px 10px">
            <CircleButton $strong aria-label="Back">{toolIcons.back}</CircleButton>
            <CircleButton $strong aria-label="Save">{toolIcons.copy}</CircleButton>
            <CircleButton $strong aria-label="Open folder">{toolIcons.folder}</CircleButton>
          </Toolbar>
          <Panes>
            <Pane><DataGrid columns={pvColumns} rows={pvRows} selected="pv0" missing="pv0" /></Pane>
            <Pane><DataGrid columns={lvColumns} rows={lvRows} selected="tp1_tierdata_2" /></Pane>
          </Panes>
        </Content>
      </Workspace>

      {errorOpen && <ErrorDialog onClose={() => setErrorOpen(false)} />}

      <Notes>
        <Note $left={1826} $top={433} $size={127}>brakujący dysk SSD</Note>
        <Note $left={2000} $top={600} $size={127}>pamięci cache</Note>
        <Note $left={2044} $top={1104} $size={119}>uszkodzenie<br />struktury<br />logicznej</Note>
        <Arrows width="740" height="1600" viewBox="1580 240 740 1600" fill="none" stroke="#0bb04a" strokeWidth="9" strokeLinecap="round" strokeLinejoin="round">
          <path d="M1717 530C1650 545 1601 490 1601 420C1603 365 1628 318 1679 270" />
          <path d="M1653 270H1680L1678 299" />
          <path d="M2124 1074C2108 1020 1998 978 1890 977C1830 976 1770 982 1712 996" />
          <path d="M1724 972L1711 996L1737 1009" />
          <path d="M2245 1566C2268 1588 2277 1608 2276 1634C2268 1712 2150 1778 2054 1796" />
          <path d="M2064 1773L2052 1796L2077 1811" />
        </Arrows>
      </Notes>
    </Window>
  );
}
